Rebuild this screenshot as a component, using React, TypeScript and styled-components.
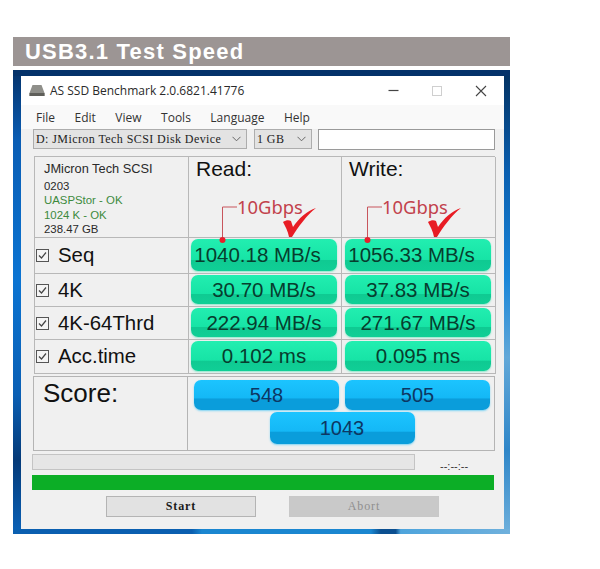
import React from "react";
import styled, {createGlobalStyle} from "styled-components";

const GlobalStyle = createGlobalStyle`
  html, body {
    margin: 0;
    padding: 0;
    background: #fff;
  }
`

const Page = styled.div`
  width: 600px;
  height: 569px;
  box-sizing: border-box;
  padding: 37px 0 0 13px;
  overflow: hidden;
  font-family: "Liberation Sans", Arial, sans-serif;
`

const Banner = styled.div`
  width: 497px;
  height: 29px;
  box-sizing: border-box;
  padding-left: 12px;
  margin-bottom: 4px;
  background: #9c9594;
  color: #fff;
  font-size: 22px;
  font-weight: 700;
  line-height: 30px;
  letter-spacing: 1.2px;
`

const Frame = styled.div`
  width: 497px;
  height: 464px;
  box-sizing: border-box;
  padding: 6px 6px 5px 8px;
  background:
    linear-gradient(90deg, #04326a, #04326a) top / 100% 6px no-repeat,
    linear-gradient(90deg, #0a5fb0 0%, #0a5fb0 36%, #1a86d0 38%, #1a86d0 72%, #0b4f90 74%, #0b4f90 77%, #4ea4dc 78%, #6fb0dc 100%) bottom / 100% 5px no-repeat,
    linear-gradient(180deg, #04326a 0%, #0a5db4 15%, #0b74d2 45%, #0a5fb4 70%, #053a78 84%, #0a62b8 100%) left / 50% 100% no-repeat,
    linear-gradient(180deg, #03305f 0%, #0a5fb0 22%, #1a86d8 45%, #62a8d8 62%, #2f86c8 82%, #6fb0dc 100%) right / 50% 100% no-repeat;
`

const Window = styled.div`
  height: 453px;
  box-sizing: border-box;
  background: #f0f0f0;
  display: flex;
  flex-direction: column;
  position: relative;
`

const TitleBar = styled.div`
  height: 29px;
  flex: none;
  background: #fff;
  display: flex;
  align-items: center;
  padding-left: 8px;
  color: #2a2a2a;
  font-family: "Open Sans", sans-serif;
  font-size: 12px;
`

const TitleText = styled.span`
  margin-left: 5px;
  flex: 1;
`

const WindowButtons = styled.div`
  display: flex;
  align-items: center;
  gap: 33px;
  padding-right: 17px;
  color: #333;
`

const MenuBar = styled.div`
  height: 24px;
  flex: none;
  background: #f9f9f9;
  display: flex;
  align-items: center;
  gap: 19.5px;
  padding-left: 15px;
  color: #333;
  font-family: "Open Sans", sans-serif;
  font-size: 12px;
`

const DriveRow = styled.div`
  display: flex;
  gap: 7px;
  height: 21px;
  flex: none;
  margin: 0 0 6px 12px;
`

const Combo = styled.div<{ $width: number }>`
  width: ${({$width}) => $width}px;
  height: 20px;
  box-sizing: border-box;
  border: 1px solid #adadad;
  background: #e3e3e3;
  display: flex;
  align-items: center;
  justify-content: space-between;
  padding: 0 5px 0 2px;
  color: #222;
  font-family: "Liberation Serif", serif;
  font-size: 12px;
  letter-spacing: 0.42px;
  white-space: nowrap;
`

const TextBox = styled.div`
  width: 177px;
  height: 21px;
  box-sizing: border-box;
  margin-left: -1px;
  border: 1px solid #9a9a9a;
  background: #fff;
`

const Results = styled.div`
  width: 461px;
  margin-left: 13px;
  display: grid;
  grid-template-columns: 154px 153px 154px;
  grid-template-rows: 81px 36px 33px 33px 34px;
  border-top: 1px solid #b8b8b8;
  border-left: 1px solid #b8b8b8;
  box-sizing: border-box;
`

const Cell = styled.div`
  box-sizing: border-box;
  border-right: 1px solid #b8b8b8;
  border-bottom: 1px solid #b8b8b8;
  position: relative;
  min-width: 0;
`

const InfoCell = styled(Cell)`
  padding: 4px 0 0 9px;
  font-size: 11.4px;
  line-height: 14.4px;
  color: #2a2a2a;
`

const InfoName = styled.div`
  font-size: 12.8px;
  line-height: 15px;
  margin-bottom: 3px;
`

const InfoOk = styled.div`
  color: #3d8a3d;
`

const HeadCell = styled(Cell)`
  padding: 0 0 0 7px;
  color: #111;
  font-size: 21px;
  line-height: 24px;
`

const Annotation = styled.div<{ $left: number }>`
  position: absolute;
  z-index: 2;
  left: ${({$left}) => $left}px;
  top: 48px;
  width: 96px;
  height: 38px;
`

const AnnotationText = styled.span`
  position: absolute;
  left: 15px;
  top: -9px;
  color: #c2424c;
  font-family: "Noto Sans", sans-serif;
  font-size: 18.4px;
  line-height: 22px;
`

const AnnotationArt = styled.svg`
  position: absolute;
  left: 0;
  top: 0;
  overflow: visible;
`

const RowLabel = styled(Cell)`
  display: flex;
  align-items: center;
  gap: 9px;
  padding-left: 1px;
  color: #111;
  font-size: 20.4px;
`

const BarCell = styled(Cell)<{ $first?: boolean }>`
  padding: 1px 4px 2px ${({$first}) => ($first ? 2 : 3)}px;
`

const Bar = styled.div<{ $tone: "green" | "blue"; $inset?: boolean }>`
  height: 100%;
  box-sizing: border-box;
  border-radius: 7px;
  display: flex;
  align-items: center;
  justify-content: center;
  padding-right: ${({$inset}) => ($inset ? 13 : 0)}px;
  font-size: 20.5px;
  color: ${({$tone}) => ($tone === "green" ? "#073d2e" : "#0d3763")};
  background: ${({$tone}) => ($tone === "green"
    ? "linear-gradient(180deg, #22eeb0 0%, #17e4a6 64%, #0fca92 67%, #10cf96 100%)"
    : "linear-gradient(180deg, #1cc4ff 0%, #14b8f6 60%, #0a9ddb 63%, #0a9ddb 100%)")};
  box-shadow: 0 1px 2px ${({$tone}) => ($tone === "green" ? "#8ce8cc" : "#7ed4f4")};
`

const ScoreTable = styled.div`
  width: 462px;
  height: 75px;
  box-sizing: border-box;
  margin: 2px 0 0 12px;
  border: 1px solid #b4b4b4;
  display: grid;
  grid-template-columns: 154px 1fr;
`

const ScoreLabel = styled.div`
  border-right: 1px solid #b4b4b4;
  padding: 1px 0 0 9px;
  color: #111;
  font-size: 26px;
  line-height: 30px;
`

const ScoreBars = styled.div`
  padding: 3px 4px 0 6px;
  display: grid;
  grid-template-columns: 145px 145px;
  grid-template-rows: 30px 32px;
  column-gap: 6px;
  row-gap: 2px;
`

const ScoreBar = styled(Bar)`
  font-size: 20px;
`

const TotalBar = styled(ScoreBar)`
  grid-column: 1 / 3;
  width: 145px;
  justify-self: center;
`

const ProgressRow = styled.div`
  display: flex;
  align-items: center;
  margin: 3px 0 0 11px;
  height: 16px;
  flex: none;
`

const ProgressTrack = styled.div`
  width: 383px;
  height: 16px;
  box-sizing: border-box;
  border: 1px solid #c4c4c4;
  background: #e6e6e6;
`

const Clock = styled.div`
  margin: 8px 0 0 25px;
  color: #333;
  font-size: 11px;
`

const GreenBar = styled.div`
  width: 462px;
  height: 15px;
  flex: none;
  margin: 5px 0 0 11px;
  background: #0cae26;
`

const ButtonRow = styled.div`
  display: flex;
  gap: 33px;
  margin: 6px 0 0 85px;
`

const ActionButton = styled.button<{ $disabled?: boolean }>`
  width: 150px;
  height: 21px;
  box-sizing: border-box;
  padding: 0;
  border: 1px solid ${({$disabled}) => ($disabled ? "#c8c8c8" : "#b4b4b4")};
  background: ${({$disabled}) => ($disabled ? "#c9c9c9" : "#e2e2e2")};
  color: ${({$disabled}) => ($disabled ? "#8f8f8f" : "#1a1a1a")};
  font-family: "Liberation Serif", serif;
  font-size: 12px;
  letter-spacing: 0.9px;
  font-weight: ${({$disabled}) => ($disabled ? 400 : 700)};
`

const CheckBox = styled.svg`
  flex: none;
`

function RowCheck() {
    return (
        <CheckBox width="13" height="13" viewBox="0 0 13 13">
            <rect x="0.5" y="0.5" width="12" height="12" fill="#f4f4f4" stroke="#555"/>
            <path d="M3 6.5 L5.5 9 L10 3.5" fill="none" stroke="#444" strokeWidth="1.2"/>
        </CheckBox>
    )
}

function Chevron() {
    return (
        <svg width="9" height="6" viewBox="0 0 9 6">
            <path d="M0.5 0.8 L4.5 4.8 L8.5 0.8" fill="none" stroke="#666" strokeWidth="1"/>
        </svg>
    )
}

function SpeedNote({left}: { left: number }) {
    return (
        <Annotation $left={left}>
            <AnnotationArt width="96" height="38" viewBox="0 0 96 38">
                <path d="M0.5 35 V2 H15" fill="none" stroke="#c8555c" strokeWidth="1"/>
                <circle cx="0.5" cy="35" r="3" fill="#e8202c"/>
                <path d="M61 17 C64 15 67 15 69 16 L71 22 C77 13 85 6 94 3 C85 10 76 22 70 32 L67 32 C66 26 63 21 61 17 Z"
                      fill="#e81c24"/>
            </AnnotationArt>
            <AnnotationText>10Gbps</AnnotationText>
        </Annotation>
    )
}

const rows = [
    {label: "Seq", read: "1040.18 MB/s", write: "1056.33 MB/s", wide: true},
    {label: "4K", read: "30.70 MB/s", write: "37.83 MB/s", wide: false},
    {label: "4K-64Thrd", read: "222.94 MB/s", write: "271.67 MB/s", wide: false},
    {label: "Acc.time", read: "0.102 ms", write: "0.095 ms", wide: false},
]

export default function App() {
    return (
        <Page>
            <GlobalStyle/>
            <Banner>USB3.1 Test Speed</Banner>
            <Frame>
                <Window>
                    <TitleBar>
                        <svg width="16" height="13" viewBox="0 0 16 13">
                            <path d="M3.5 1 H12.5 L15.5 9 V12 H0.5 V9 Z" fill="#8f8f8a"/>
                            <path d="M0.5 9 H15.5 V12 H0.5 Z" fill="#5f5f5a"/>
                        </svg>
                        <TitleText>AS SSD Benchmark 2.0.6821.41776</TitleText>
                        <WindowButtons>
                            <svg width="11" height="11" viewBox="0 0 11 11">
                                <path d="M0.5 5.5 H10.5" stroke="#444" strokeWidth="1.2"/>
                            </svg>
                            <svg width="10" height="10" viewBox="0 0 10 10">
                                <rect x="0.5" y="0.5" width="9" height="9" fill="none" stroke="#cfcfcf"/>
                            </svg>
                            <svg width="12" height="12" viewBox="0 0 12 12">
                                <path d="M1 1 L11 11 M11 1 L1 11" stroke="#444" strokeWidth="1.1"/>
                            </svg>
                        </WindowButtons>
                    </TitleBar>
                    <MenuBar>
                        <span>File</span>
                        <span>Edit</span>
                        <span>View</span>
                        <span>Tools</span>
                        <span>Language</span>
                        <span>Help</span>
                    </MenuBar>
                    <DriveRow>
                        <Combo $width={214}>D: JMicron Tech SCSI Disk Device <Chevron/></Combo>
                        <Combo $width={58}>1 GB <Chevron/></Combo>
                        <TextBox/>
                    </DriveRow>
                    <Results>
                        <InfoCell>
                            <InfoName>JMicron Tech SCSI</InfoName>
                            <div>0203</div>
                            <InfoOk>UASPStor - OK</InfoOk>
                            <InfoOk>1024 K - OK</InfoOk>
                            <div>238.47 GB</div>
                        </InfoCell>
                        <HeadCell>
                            Read:
                            <SpeedNote left={33}/>
                        </HeadCell>
                        <HeadCell>
                            Write:
                            <SpeedNote left={25}/>
                        </HeadCell>
                        {rows.map((row) => (
                            <React.Fragment key={row.label}>
                                <RowLabel><RowCheck/>{row.label}</RowLabel>
                                <BarCell $first><Bar $tone="green" $inset={row.wide}>{row.read}</Bar></BarCell>
                                <BarCell><Bar $tone="green" $inset={row.wide}>{row.write}</Bar></BarCell>
                            </React.Fragment>
                        ))}
                    </Results>
                    <ScoreTable>
                        <ScoreLabel>Score:</ScoreLabel>
                        <ScoreBars>
                            <ScoreBar $tone="blue">548</ScoreBar>
                            <ScoreBar $tone="blue">505</ScoreBar>
                            <TotalBar $tone="blue">1043</TotalBar>
                        </ScoreBars>
                    </ScoreTable>
                    <ProgressRow>
                        <ProgressTrack/>
                        <Clock>--:--:--</Clock>
                    </ProgressRow>
                    <GreenBar/>
                    <ButtonRow>
                        <ActionButton>Start</ActionButton>
                        <ActionButton $disabled>Abort</ActionButton>
                    </ButtonRow>
                </Window>
            </Frame>
        </Page>
    )
}
